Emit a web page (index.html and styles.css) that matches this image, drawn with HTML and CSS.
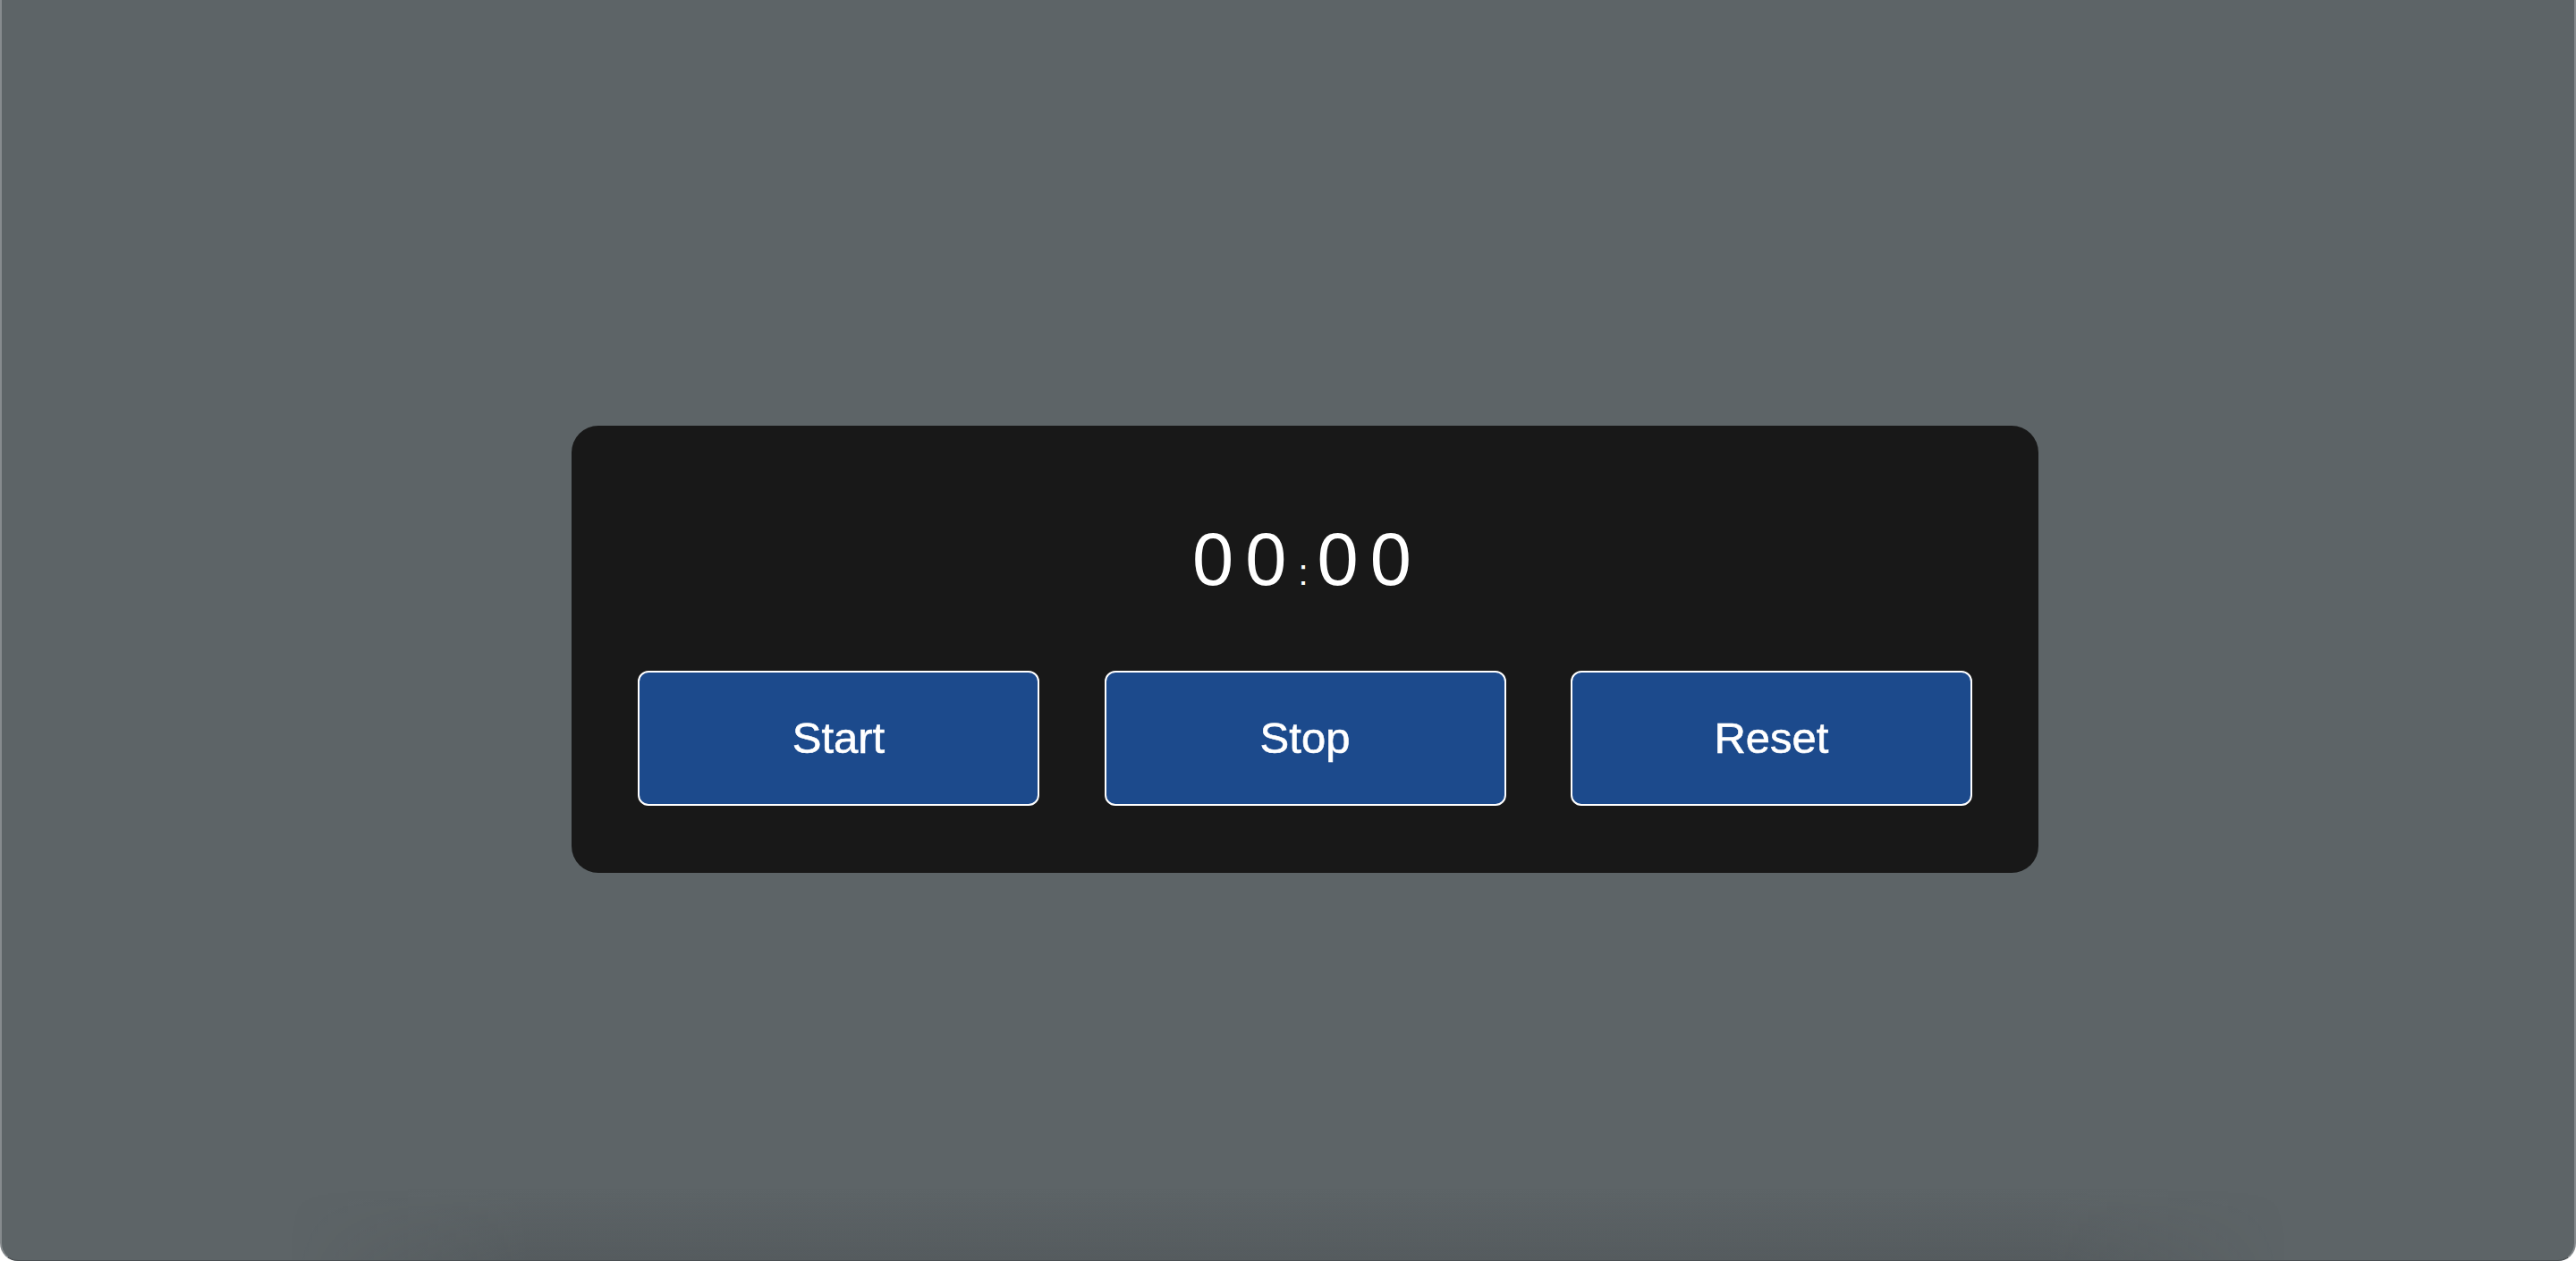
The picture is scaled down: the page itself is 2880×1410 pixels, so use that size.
FILE: index.html
```html
<!DOCTYPE html>
<html lang="en">
<head>
<meta charset="utf-8">
<title>Stopwatch</title>
<link rel="stylesheet" href="styles.css">
</head>
<body>
<div class="window">
  <main class="stopwatch">
    <div class="timer"><span class="digits">00</span><span class="colon">:</span><span class="digits">00</span></div>
    <div class="controls">
      <button class="btn" type="button">Start</button>
      <button class="btn" type="button">Stop</button>
      <button class="btn" type="button">Reset</button>
    </div>
  </main>
  <div class="shade"></div>
</div>
</body>
</html>
```

FILE: styles.css
```css
html, body {
  margin: 0;
  padding: 0;
  background: #ffffff;
}

body {
  width: 2880px;
  height: 1410px;
  overflow: hidden;
  font-family: "Liberation Sans", Arial, sans-serif;
}

.window {
  position: relative;
  box-sizing: border-box;
  width: 2880px;
  height: 1410px;
  background: #5d6467;
  border-left: 2px solid #868b8e;
  border-right: 2px solid #868b8e;
  border-bottom: 1px solid #4a4f52;
  border-radius: 0 0 20px 20px;
  display: flex;
  align-items: center;
  justify-content: center;
  padding: 42px 0 0 38px;
  overflow: hidden;
}

.shade {
  position: absolute;
  left: 320px;
  right: 320px;
  bottom: 0;
  height: 80px;
  background: linear-gradient(to bottom, rgba(45, 48, 52, 0), rgba(45, 48, 52, 0.16));
  -webkit-mask-image: linear-gradient(to right, transparent 0%, #000 12%, #000 88%, transparent 100%);
  mask-image: linear-gradient(to right, transparent 0%, #000 12%, #000 88%, transparent 100%);
  pointer-events: none;
}

.stopwatch {
  box-sizing: border-box;
  width: 1640px;
  height: 500px;
  background: #181818;
  border-radius: 30px;
  padding: 108px 74px 75px;
  display: flex;
  flex-direction: column;
  align-items: center;
  position: relative;
  z-index: 1;
}

.timer {
  color: #ffffff;
  line-height: 1;
  height: 82px;
  margin-left: 6px;
  white-space: nowrap;
}

.digits {
  font-size: 83px;
  letter-spacing: 13px;
  line-height: 1;
}

.colon {
  font-size: 40px;
  letter-spacing: 10px;
  line-height: 1;
}

.controls {
  margin-top: 84px;
  width: 100%;
  display: flex;
  justify-content: space-between;
}

.btn {
  box-sizing: border-box;
  width: 449px;
  height: 151px;
  background: #1c4a8c;
  color: #ffffff;
  border: 2px solid #ffffff;
  border-radius: 12px;
  font-family: "Liberation Sans", Arial, sans-serif;
  font-size: 49px;
  -webkit-text-stroke: 0.6px #ffffff;
  padding: 0;
  cursor: pointer;
}
```
